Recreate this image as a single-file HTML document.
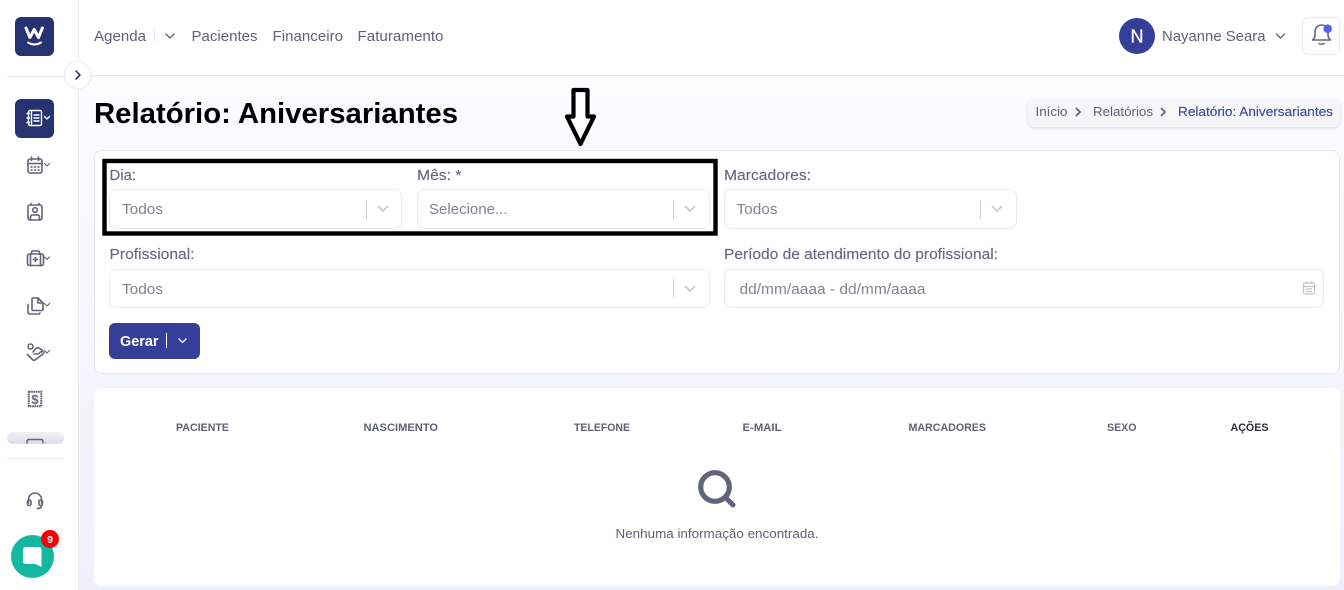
<!DOCTYPE html>
<html lang="pt"><head><meta charset="utf-8"><title>Relatório: Aniversariantes</title>
<style>
html,body{margin:0;padding:0;width:1344px;height:590px;overflow:hidden;background:#fff}
svg{display:block}
text{font-family:"Liberation Sans",sans-serif}
.l{font-size:15px;fill:#666980;stroke:#666980;stroke-width:.15}
.p{font-size:15px;fill:#81838f}
.n{font-size:15px;fill:#5f6277}
.h{font-size:11px;font-weight:700;fill:#5f6277}
.i{fill:none;stroke:#62647a;stroke-width:1.6;stroke-linecap:round;stroke-linejoin:round}
.c{fill:none;stroke:#c9cad0;stroke-width:1.8}
.b{fill:#fff;stroke:#e9eaf0}
</style></head><body>
<svg width="1344" height="590" viewBox="0 0 1344 590" xmlns="http://www.w3.org/2000/svg">
<defs><linearGradient id="g" x1="0" y1="0" x2="0" y2="1"><stop offset="0" stop-color="#fbfcff"/><stop offset="1" stop-color="#eef0fb"/></linearGradient>
<filter id="s" x="-5%" y="-20%" width="110%" height="150%"><feDropShadow dx="0" dy="1" stdDeviation="1.5" flood-color="#000" flood-opacity=".13"/></filter>
<linearGradient id="sc" x1="0" y1="0" x2="0" y2="1"><stop offset="0" stop-color="#f1f1f5"/><stop offset="1" stop-color="#dcdde5"/></linearGradient></defs>
<rect width="1344" height="590" fill="#fff"/>
<rect x="79" y="76" width="1265" height="514" fill="url(#g)"/>
<rect x="78" y="0" width="1" height="590" fill="#e8e9f1"/>
<rect x="79" y="75" width="1265" height="1" fill="#e8e9f1"/>
<rect x="7" y="76" width="58" height="1" fill="#e8e9f1"/>

<!-- logo -->
<rect x="15" y="17" width="39" height="39" rx="6" fill="#273271"/>
<path d="M26 28l3.900 9.500 4.300-8 4.300 8 3.900-9.500" fill="none" stroke="#fff" stroke-width="3" stroke-linejoin="round" stroke-linecap="round"/>
<path d="M28 42.500q6.500 4 13 0" fill="none" stroke="#fff" stroke-width="2" stroke-linecap="round"/>
<!-- collapse -->
<circle cx="78" cy="75" r="13.500" fill="#fff" stroke="#e8e9f1"/>
<path d="M76 71l4 4-4 4" fill="none" stroke="#24284f" stroke-width="1.500" stroke-linecap="round" stroke-linejoin="round"/>

<!-- active -->
<rect x="15" y="99" width="39" height="39" rx="6" fill="#273271"/>
<g fill="none" stroke="#fff" stroke-width="1.400" stroke-linecap="round" stroke-linejoin="round">
<rect x="28.500" y="110.500" width="13" height="15" rx="1.500"/><path d="M31.500 111v14M34 115h5M34 118h5M34 121h5M27 113.500h2.500M27 118h2.500M27 122.500h2.500"/><path d="M44.500 116.500l2.500 2.500 2.500-2.500" stroke-width="1.300"/></g>
<!-- calendar -->
<g class="i"><rect x="28" y="159" width="14" height="14" rx="2"/><path d="M28 163.500h14M31.500 157v3.500M38.500 157v3.500M31 167h1M34.500 167h1M38 167h1M31 170h1M34.500 170h1M38 170h1"/><path d="M44.500 163.500l2.500 2.500 2.500-2.500" stroke-width="1.200"/></g>
<!-- contact -->
<g class="i"><rect x="28" y="205" width="14" height="15" rx="2"/><path d="M31 205v-1.500M39 205v-1.500"/><circle cx="35" cy="210" r="2.300"/><path d="M30.500 219v-2q0-2 2-2h5q2 0 2 2v2"/></g>
<!-- case -->
<g class="i"><rect x="27.500" y="254" width="16" height="11.500" rx="2"/><path d="M31.500 254v-1.500q0-1.500 1.500-1.500h5q1.500 0 1.500 1.500v1.500M30.500 254v11.500M40.500 254v11.500M33.500 259.500h4M35.500 257.500v4"/><path d="M44.500 257l2.500 2.500 2.500-2.500" stroke-width="1.200"/></g>
<!-- files -->
<g class="i"><path d="M33 298h5l5 5v6.500q0 1-1 1h-9q-1 0-1-1v-10.500q0-1 1-1z"/><path d="M38 298v5h5"/><path d="M28 304.500v7.500q0 2 2 2h8q1.500 0 2-1"/><path d="M44.500 303.500l2.500 2.500 2.500-2.500" stroke-width="1.200"/></g>
<!-- hand -->
<g class="i"><circle cx="30.500" cy="346.500" r="2.500"/><path d="M27.500 354.500l5.500 5.500q1 .5 2 0l8-6q1.500-1.500 0-2.500-1-.5-2 .5l-3 2h-4"/><path d="M33 352q3-5 6-4l2.500 1.500q1 1-.5 2.500"/><path d="M44.500 350.500l2.500 2.500 2.500-2.500" stroke-width="1.200"/></g>
<!-- dollar -->
<rect x="28.800" y="391.800" width="12.500" height="14.500" fill="none" stroke="#62647a" stroke-width="2" stroke-dasharray="1.700 .6"/>
<text x="35" y="404" text-anchor="middle" style="font-size:13px;font-weight:700;fill:#62647a">$</text>
<!-- scroll -->
<rect x="7" y="432" width="57" height="12" rx="6" fill="url(#sc)"/>
<path d="M27 443.500v-2q0-2 2-2h12q2 0 2 2v2" fill="none" stroke="#62647a" stroke-width="1.500"/>
<rect x="7" y="458" width="57" height="1" fill="#e8e9f1"/>
<!-- headset -->
<g class="i"><path d="M28.500 503v-3.500a6.500 6.500 0 0 1 13 0v3.500"/><rect x="27.500" y="500" width="3.500" height="5.500" rx="1.500"/><rect x="39" y="500" width="3.500" height="5.500" rx="1.500"/><path d="M41.500 505.500q0 3-4 3"/></g>
<!-- chat -->
<circle cx="32.500" cy="556.500" r="21.500" fill="#14b8a0"/>
<path d="M25.500 547h13.500q2.500 0 2.500 2.500v17.500l-6-3h-10q-2.500 0-2.500-2.500v-12q0-2.500 2.500-2.500z" fill="#fff"/>
<circle cx="50" cy="539" r="9" fill="#fb0007"/>
<text x="50" y="543" text-anchor="middle" style="font-size:10.500px;font-weight:700;fill:#fff">9</text>

<!-- top nav -->
<g class="n">
<text x="94" y="41" textLength="52" lengthAdjust="spacingAndGlyphs">Agenda</text>
<text x="191.500" y="41" textLength="66" lengthAdjust="spacingAndGlyphs">Pacientes</text>
<text x="272.500" y="41" textLength="70.500" lengthAdjust="spacingAndGlyphs">Financeiro</text>
<text x="357.500" y="41" textLength="86" lengthAdjust="spacingAndGlyphs">Faturamento</text>
</g>
<rect x="154" y="29" width="1" height="13" fill="#e3e4ea"/>
<path d="M166 34l4 4 4-4" fill="none" stroke="#5f6277" stroke-width="1.300" stroke-linecap="round" stroke-linejoin="round"/>

<circle cx="1137" cy="36" r="18" fill="#353f99"/>
<text x="1137" y="42.500" text-anchor="middle" style="font-size:18px;fill:#fff;stroke:#fff;stroke-width:.3">N</text>
<text x="1162" y="41" textLength="103.500" lengthAdjust="spacingAndGlyphs" class="n">Nayanne Seara</text>
<path d="M1276.500 34l4 4 4-4" fill="none" stroke="#5f6277" stroke-width="1.300" stroke-linecap="round" stroke-linejoin="round"/>
<rect x="1302.500" y="17.500" width="37" height="37" rx="6" fill="#fff" stroke="#e9eaf0"/>
<g class="i"><path d="M1312.500 40q2.500-2 2.500-5.500v-3a6.500 6.500 0 0 1 13 0v3q0 3.500 2.500 5.500z"/><path d="M1319 43.500q2.500 1.500 5 0"/></g>
<circle cx="1327.700" cy="28.700" r="4.300" fill="#5b5ff0"/>

<!-- title -->
<text x="94" y="123" textLength="364" lengthAdjust="spacingAndGlyphs" style="font-size:29px;font-weight:700;fill:#000">Relatório: Aniversariantes</text>
<!-- breadcrumb -->
<rect x="1028" y="98" width="312" height="29" rx="7" fill="#f6f6f9" filter="url(#s)"/>
<text x="1035.500" y="116" textLength="32" lengthAdjust="spacingAndGlyphs" style="font-size:13px;fill:#5f6277">Início</text>
<path d="M1076 108l4 4-4 4M1161 108l4 4-4 4" fill="none" stroke="#5f6277" stroke-width="1.700"/>
<text x="1093" y="116" textLength="60" lengthAdjust="spacingAndGlyphs" style="font-size:13px;fill:#5f6277">Relatórios</text>
<text x="1178" y="116" textLength="155" lengthAdjust="spacingAndGlyphs" style="font-size:13px;fill:#3f49a3;stroke:#3f49a3;stroke-width:.15">Relatório: Aniversariantes</text>

<!-- cards -->
<rect x="94.500" y="150.500" width="1245" height="223" rx="7" fill="#fff" stroke="#e7e8f0"/>
<rect x="94" y="388" width="1246" height="198" rx="7" fill="#fff"/>

<!-- form -->
<g class="l">
<text x="109.500" y="180" textLength="26.500" lengthAdjust="spacingAndGlyphs">Dia:</text>
<text x="417" y="180" textLength="44.500" lengthAdjust="spacingAndGlyphs">Mês: *</text>
<text x="724" y="180" textLength="87" lengthAdjust="spacingAndGlyphs">Marcadores:</text>
<text x="109.500" y="259" textLength="85" lengthAdjust="spacingAndGlyphs">Profissional:</text>
<text x="724" y="259" textLength="274" lengthAdjust="spacingAndGlyphs">Período de atendimento do profissional:</text>
</g>
<rect class="b" x="109.500" y="189.500" width="292" height="39" rx="7"/>
<rect class="b" x="417.500" y="189.500" width="292" height="39" rx="7"/>
<rect class="b" x="724.500" y="189.500" width="292" height="39" rx="7"/>
<rect class="b" x="109.500" y="269.500" width="600" height="38" rx="7"/>
<rect class="b" x="724.500" y="269.500" width="599" height="38" rx="7"/>
<g class="p">
<text x="122" y="214" textLength="41" lengthAdjust="spacingAndGlyphs">Todos</text>
<text x="429" y="214" textLength="78.500" lengthAdjust="spacingAndGlyphs">Selecione...</text>
<text x="736.500" y="214" textLength="41" lengthAdjust="spacingAndGlyphs">Todos</text>
<text x="122" y="294" textLength="41" lengthAdjust="spacingAndGlyphs">Todos</text>
<text x="739.500" y="294" textLength="186" lengthAdjust="spacingAndGlyphs">dd/mm/aaaa - dd/mm/aaaa</text>
</g>
<g fill="#cfd0d6"><rect x="366" y="200" width="1" height="19"/><rect x="673" y="200" width="1" height="19"/><rect x="980" y="200" width="1" height="19"/><rect x="673" y="279" width="1" height="19"/></g>
<path class="c" d="M378 206l5 5 5-5M685 206l5 5 5-5M992 206l5 5 5-5M685 286l5 5 5-5"/>
<g fill="none" stroke="#c4c5cc" stroke-width="1.200"><rect x="1303.500" y="283" width="11" height="11" rx="1.500"/><path d="M1303.500 286.500h11M1306.500 281.500v2.500M1311.500 281.500v2.500M1306 289h6M1306 291.500h6"/></g>

<!-- button -->
<rect x="109" y="323" width="91" height="36" rx="6" fill="#353f99"/>
<text x="120" y="346" textLength="38.500" lengthAdjust="spacingAndGlyphs" style="font-size:14.500px;font-weight:700;fill:#fff">Gerar</text>
<rect x="166" y="333" width="1" height="15" fill="#fff"/>
<path d="M179 339l3.500 3.500 3.500-3.500" fill="none" stroke="#fff" stroke-width="1.300" stroke-linecap="round" stroke-linejoin="round"/>

<!-- table head -->
<g class="h">
<text x="176" y="431" textLength="53" lengthAdjust="spacingAndGlyphs">PACIENTE</text>
<text x="363.500" y="431" textLength="74.500" lengthAdjust="spacingAndGlyphs">NASCIMENTO</text>
<text x="574" y="431" textLength="56" lengthAdjust="spacingAndGlyphs">TELEFONE</text>
<text x="742.500" y="431" textLength="39" lengthAdjust="spacingAndGlyphs">E-MAIL</text>
<text x="908.500" y="431" textLength="77.500" lengthAdjust="spacingAndGlyphs">MARCADORES</text>
<text x="1107" y="431" textLength="29.500" lengthAdjust="spacingAndGlyphs">SEXO</text>
<text x="1230.500" y="431" textLength="38" lengthAdjust="spacingAndGlyphs" style="fill:#2c2e3a">AÇÕES</text>
</g>
<circle cx="715" cy="487" r="14.300" fill="none" stroke="#62647a" stroke-width="5.200"/>
<path d="M726 498l7 7" stroke="#62647a" stroke-width="5" stroke-linecap="round"/>
<text x="615.500" y="538" textLength="203" lengthAdjust="spacingAndGlyphs" style="font-size:13px;fill:#5f6277">Nenhuma informação encontrada.</text>

<!-- annotation -->
<rect x="104.500" y="161" width="611" height="72.500" fill="none" stroke="#000" stroke-width="4.400"/>
<path d="M573.500 90h14v26.500h6.500l-13.500 27.500-13.500-27.500h6.500z" fill="#fff" stroke="#000" stroke-width="4.200" stroke-linejoin="round"/>
</svg>
</body></html>
